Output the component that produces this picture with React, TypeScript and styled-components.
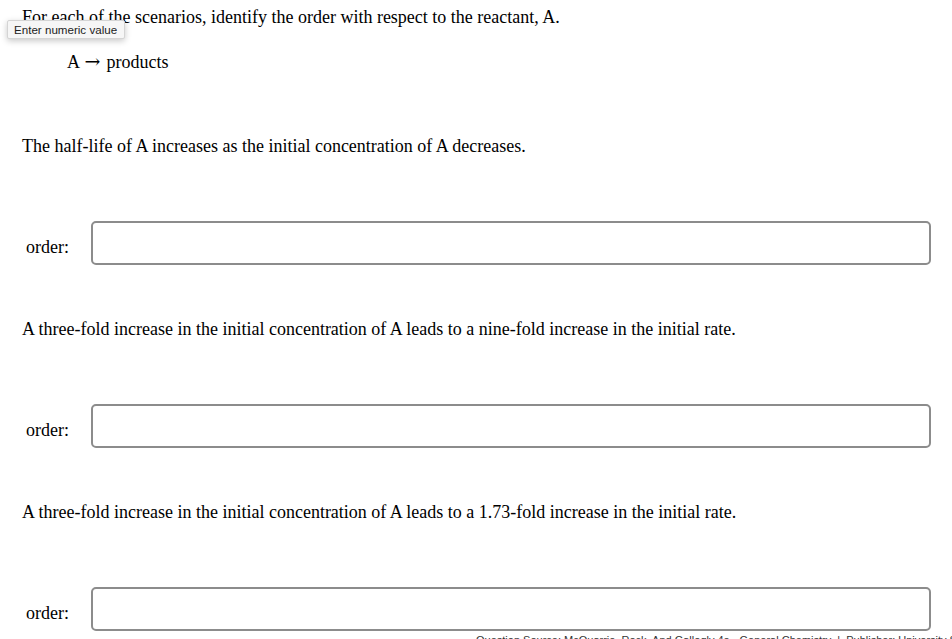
import React from "react";
import styled, { createGlobalStyle } from "styled-components";

const Global = createGlobalStyle`
  html, body { margin: 0; padding: 0; overflow: hidden; background: #ffffff; }
  body { font-family: "Liberation Serif", "Times New Roman", serif; color: #000; }
`;

const Page = styled.div`
  position: relative;
  width: 952px;
  height: 639px;
  padding-top: 7px;
  box-sizing: border-box;
  overflow: hidden;
`;

const Para = styled.p<{ $indent?: number; $top?: number }>`
  margin: ${(p) => p.$top ?? 0}px 0 0 ${(p) => p.$indent ?? 22}px;
  font-size: 18px;
  line-height: 20px;
  white-space: nowrap;
`;

const Arrow = styled.span`
  font-family: "DejaVu Serif", serif;
  font-size: 19px;
  line-height: 0;
  margin: 0 6px 0 1px;
`;

const Row = styled.div`
  display: flex;
  align-items: center;
  margin-top: 65px;
  padding-left: 26px;
`;

const Label = styled.label`
  width: 65px;
  padding-top: 7px;
  font-size: 18px;
  line-height: 20px;
`;

const Input = styled.input`
  width: 840px;
  height: 44px;
  box-sizing: border-box;
  border: 2px solid #8c8c8c;
  border-radius: 5px;
  background: #fff;
  outline: none;
  padding: 0 8px;
  font-size: 18px;
  font-family: "Liberation Serif", serif;
`;

const Tooltip = styled.div`
  position: absolute;
  left: 7px;
  top: 20px;
  height: 19px;
  padding: 0 7px 0 6px;
  box-sizing: border-box;
  display: flex;
  align-items: center;
  background: #f6f6f6;
  border: 1px solid #d4d4d4;
  border-radius: 2px;
  box-shadow: 0 2px 6px rgba(0, 0, 0, 0.22);
  font-family: "Liberation Sans", Arial, sans-serif;
  font-size: 11.6px;
  color: #222;
  white-space: nowrap;
`;

const Footer = styled.div`
  margin-top: 3px;
  padding-left: 476px;
  font-family: "Liberation Sans", Arial, sans-serif;
  font-size: 11px;
  line-height: 13px;
  color: #333;
  white-space: nowrap;
`;

const questions = [
  "The half-life of A increases as the initial concentration of A decreases.",
  "A three-fold increase in the initial concentration of A leads to a nine-fold increase in the initial rate.",
  "A three-fold increase in the initial concentration of A leads to a 1.73-fold increase in the initial rate.",
];

export default function App() {
  return (
    <>
      <Global />
      <Page>
        <Para>For each of the scenarios, identify the order with respect to the reactant, A.</Para>
        <Para $indent={67} $top={25}>
          A <Arrow>→</Arrow>products
        </Para>
        {questions.map((q, i) => (
          <React.Fragment key={i}>
            <Para $top={i === 0 ? 64 : 54}>{q}</Para>
            <Row>
              <Label>order:</Label>
              <Input type="text" />
            </Row>
          </React.Fragment>
        ))}
        <Footer>
          Question Source: McQuarrie, Rock, And Gallogly 4e - General Chemistry &nbsp;|&nbsp; Publisher: University Science Books
        </Footer>
        <Tooltip>Enter numeric value</Tooltip>
      </Page>
    </>
  );
}
